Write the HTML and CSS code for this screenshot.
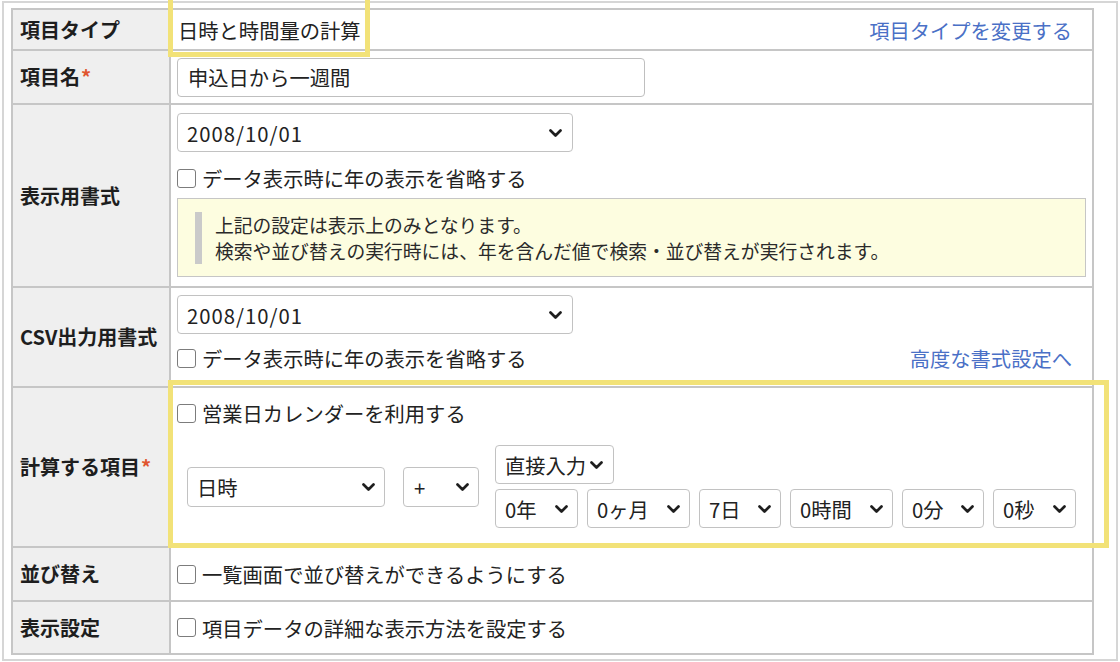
FILE: index.html
```html
<!DOCTYPE html>
<html lang="ja">
<head>
<meta charset="utf-8">
<title>項目設定</title>
<link rel="stylesheet" href="styles.css">
</head>
<body>
<div class="frame">
  <div class="form">
    <div class="label">項目タイプ</div>
    <div class="value v-type"><span>日時と時間量の計算</span><a class="link">項目タイプを変更する</a></div>

    <div class="label">項目名<span class="req">*</span></div>
    <div class="value v-middle"><div class="input">申込日から一週間</div></div>

    <div class="label">表示用書式</div>
    <div class="value v-format">
      <div class="select w-fmt"><span class="num">2008/10/01</span><svg class="chev" viewBox="0 0 13 8"><path d="M1.5 1.5 L6.5 6.5 L11.5 1.5"/></svg></div>
      <div class="check c-fmt"><span class="box"></span>データ表示時に年の表示を省略する</div>
      <div class="notice"><div class="notice-text">上記の設定は表示上のみとなります。<br>検索や並び替えの実行時には、年を含んだ値で検索・並び替えが実行されます。</div></div>
    </div>

    <div class="label">CSV出力用書式</div>
    <div class="value v-csv">
      <div class="select w-fmt"><span class="num">2008/10/01</span><svg class="chev" viewBox="0 0 13 8"><path d="M1.5 1.5 L6.5 6.5 L11.5 1.5"/></svg></div>
      <div class="check-row">
        <div class="check"><span class="box"></span>データ表示時に年の表示を省略する</div>
        <a class="link">高度な書式設定へ</a>
      </div>
    </div>

    <div class="label">計算する項目<span class="req">*</span></div>
    <div class="value v-calc">
      <div class="check"><span class="box"></span>営業日カレンダーを利用する</div>
      <div class="calc">
        <div class="select w-field tall"><span>日時</span><svg class="chev" viewBox="0 0 13 8"><path d="M1.5 1.5 L6.5 6.5 L11.5 1.5"/></svg></div>
        <div class="select w-op tall"><span>+</span><svg class="chev" viewBox="0 0 13 8"><path d="M1.5 1.5 L6.5 6.5 L11.5 1.5"/></svg></div>
        <div class="calc-right">
          <div class="select w-mode"><span>直接入力</span><svg class="chev" viewBox="0 0 13 8"><path d="M1.5 1.5 L6.5 6.5 L11.5 1.5"/></svg></div>
          <div class="durations">
            <div class="select w-s"><span>0年</span><svg class="chev" viewBox="0 0 13 8"><path d="M1.5 1.5 L6.5 6.5 L11.5 1.5"/></svg></div>
            <div class="select w-l"><span>0ヶ月</span><svg class="chev" viewBox="0 0 13 8"><path d="M1.5 1.5 L6.5 6.5 L11.5 1.5"/></svg></div>
            <div class="select w-s2"><span>7日</span><svg class="chev" viewBox="0 0 13 8"><path d="M1.5 1.5 L6.5 6.5 L11.5 1.5"/></svg></div>
            <div class="select w-l"><span>0時間</span><svg class="chev" viewBox="0 0 13 8"><path d="M1.5 1.5 L6.5 6.5 L11.5 1.5"/></svg></div>
            <div class="select w-s2"><span>0分</span><svg class="chev" viewBox="0 0 13 8"><path d="M1.5 1.5 L6.5 6.5 L11.5 1.5"/></svg></div>
            <div class="select w-s"><span>0秒</span><svg class="chev" viewBox="0 0 13 8"><path d="M1.5 1.5 L6.5 6.5 L11.5 1.5"/></svg></div>
          </div>
        </div>
      </div>
    </div>

    <div class="label">並び替え</div>
    <div class="value v-middle"><div class="check"><span class="box"></span>一覧画面で並び替えができるようにする</div></div>

    <div class="label">表示設定</div>
    <div class="value v-middle"><div class="check"><span class="box"></span>項目データの詳細な表示方法を設定する</div></div>
  </div>

  <div class="highlight hl-type"></div>
  <div class="highlight hl-calc"></div>
</div>
</body>
</html>
```

FILE: styles.css
```css
* { box-sizing: border-box; }

html, body {
  margin: 0;
  padding: 0;
  background: #ffffff;
}

body {
  font-family: "Noto Sans CJK JP", "Noto Sans", sans-serif;
  font-size: 20.3px;
  line-height: 28px;
  color: #222222;
}

.frame {
  position: relative;
  margin: 1px 0 0 2px;
  width: 1116px;
  height: 660px;
  border: 2px solid #d6d6d6;
}

.form {
  margin: 5px 0 0 7px;
  width: 1083px;
  display: grid;
  grid-template-columns: 158px 923px;
  grid-template-rows: 41px 54px 183px 100px 160px 54px 53px;
  border-top: 2px solid #c6c6c6;
  border-left: 2px solid #c6c6c6;
}

.label, .value {
  border-right: 2px solid #c6c6c6;
  border-bottom: 2px solid #c6c6c6;
}

.label {
  background: #efefef;
  display: flex;
  align-items: center;
  padding-left: 7px;
  font-weight: bold;
  font-size: 20px;
  color: #1e1e1e;
}

.req {
  color: #e0552e;
  margin-left: 1px;
}

.value {
  display: flex;
  padding: 0 6px;
  background: #fff;
}

.link {
  color: #4a70c6;
  text-decoration: none;
}

.v-type {
  align-items: center;
  justify-content: space-between;
  padding: 0 20px 0 7px;
}

.v-middle {
  align-items: center;
}

.input {
  width: 468px;
  height: 39px;
  border: 1px solid #bfbfbf;
  border-radius: 4px;
  padding-left: 10px;
  display: flex;
  align-items: center;
}

.select {
  height: 39px;
  border: 1px solid #c2c2c2;
  border-radius: 4px;
  background: #fff;
  display: flex;
  align-items: center;
  justify-content: space-between;
  padding: 0 9px 0 9px;
  flex: none;
  white-space: nowrap;
}

.select span { white-space: nowrap; }

.select.tall { height: 40px; }

.num { letter-spacing: 1px; }

.chev {
  width: 13px;
  height: 8px;
  flex: none;
}

.chev path {
  fill: none;
  stroke: #1e1e1e;
  stroke-width: 2.7;
  stroke-linecap: round;
  stroke-linejoin: round;
}

.w-fmt { width: 396px; padding-right: 10px; }
.w-field { width: 198px; }
.w-op { width: 76px; padding-left: 10px; }
.w-mode { width: 119px; padding: 0 7px 0 9px; justify-content: flex-start; }
.w-mode .chev { margin-left: 4px; }
.w-s { width: 83px; }
.w-s2 { width: 82px; }
.w-l { width: 103px; }

.check {
  display: flex;
  align-items: center;
  height: 28px;
}

.box {
  width: 19px;
  height: 19px;
  border: 1px solid #7c7c7c;
  border-radius: 3px;
  background: #fff;
  margin-right: 6px;
  flex: none;
}

.v-format {
  flex-direction: column;
  align-items: flex-start;
  padding-top: 8px;
}

.c-fmt { margin-top: 12px; }

.notice {
  margin-top: 6px;
  width: 909px;
  height: 79px;
  border: 1px solid #c6c6c6;
  background: #fdfde0;
  padding: 13px 12px 0 17px;
}

.notice-text {
  border-left: 7px solid #cacaca;
  padding-left: 13px;
  font-size: 18.8px;
  line-height: 26px;
  color: #2a2a2a;
}

.v-csv {
  flex-direction: column;
  align-items: flex-start;
  padding-top: 7px;
}

.check-row {
  margin-top: 10px;
  width: 100%;
  display: flex;
  justify-content: space-between;
  align-items: center;
  padding-right: 14px;
}

.v-calc {
  flex-direction: column;
  align-items: flex-start;
  padding-top: 11px;
}

.calc {
  margin-top: 18px;
  margin-left: 10px;
  display: flex;
  align-items: center;
}

.w-field { margin-right: 18px; }
.w-op { margin-right: 16px; }

.calc-right {
  display: flex;
  flex-direction: column;
  align-items: flex-start;
  gap: 5px;
}

.durations {
  display: flex;
  gap: 9px;
}

.highlight {
  position: absolute;
  border: 5px solid #f2e278;
  pointer-events: none;
}

.hl-type {
  left: 164px;
  top: -13px;
  width: 202px;
  height: 67px;
}

.hl-calc {
  left: 164px;
  top: 377px;
  width: 941px;
  height: 168px;
}
```
